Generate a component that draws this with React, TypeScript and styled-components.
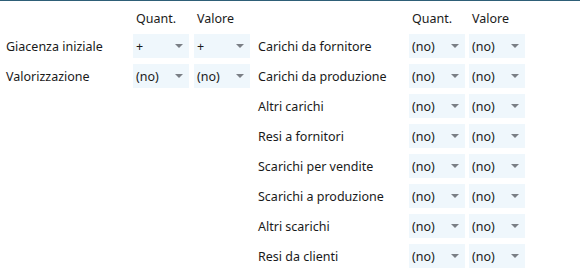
import React from 'react';
import styled, { createGlobalStyle } from 'styled-components';

const GlobalStyle = createGlobalStyle`
  body {
    margin: 0;
    background: #ffffff;
    font-family: "Noto Sans", "Open Sans", sans-serif;
    font-size: 12.5px;
    color: #1a1a1a;
  }
`;

const Page = styled.div`
  border-top: 1px solid #2e5f77;
  padding: 7px 0 0 6px;
  display: flex;
  gap: 8px;
  align-items: flex-start;
`;

const Group = styled.div<{ $label: number; $gap: number }>`
  display: grid;
  grid-template-columns: ${(p) => p.$label}px 56px 56px;
  grid-auto-rows: 24px;
  grid-template-rows: 20px;
  column-gap: ${(p) => p.$gap}px;
  row-gap: 6px;
  align-items: center;
`;

const Head = styled.div`
  padding-left: 3px;
  white-space: nowrap;
`;

const Label = styled.div`
  white-space: nowrap;
`;

const Select = styled.div`
  height: 24px;
  background: #eff7fc;
  display: flex;
  align-items: center;
  justify-content: space-between;
  padding: 0 6px 0 3px;
  box-sizing: border-box;
`;

const Arrow = styled.span`
  width: 0;
  height: 0;
  border-left: 4px solid transparent;
  border-right: 4px solid transparent;
  border-top: 4px solid #7a7f85;
`;

type Row = { label: string; q: string; v: string };

const left: Row[] = [
  { label: 'Giacenza iniziale', q: '+', v: '+' },
  { label: 'Valorizzazione', q: '(no)', v: '(no)' },
];

const right: Row[] = [
  'Carichi da fornitore',
  'Carichi da produzione',
  'Altri carichi',
  'Resi a fornitori',
  'Scarichi per vendite',
  'Scarichi a produzione',
  'Altri scarichi',
  'Resi da clienti',
].map((label) => ({ label, q: '(no)', v: '(no)' }));

function Dropdown({ value }: { value: string }) {
  return (
    <Select>
      <span>{value}</span>
      <Arrow />
    </Select>
  );
}

function Table({ rows, labelWidth, gap }: { rows: Row[]; labelWidth: number; gap: number }) {
  return (
    <Group $label={labelWidth} $gap={gap}>
      <div />
      <Head>Quant.</Head>
      <Head>Valore</Head>
      {rows.map((r) => (
        <React.Fragment key={r.label}>
          <Label>{r.label}</Label>
          <Dropdown value={r.q} />
          <Dropdown value={r.v} />
        </React.Fragment>
      ))}
    </Group>
  );
}

export default function App() {
  return (
    <>
      <GlobalStyle />
      <Page>
        <Table rows={left} labelWidth={122} gap={5} />
        <Table rows={right} labelWidth={147} gap={4} />
      </Page>
    </>
  );
}
